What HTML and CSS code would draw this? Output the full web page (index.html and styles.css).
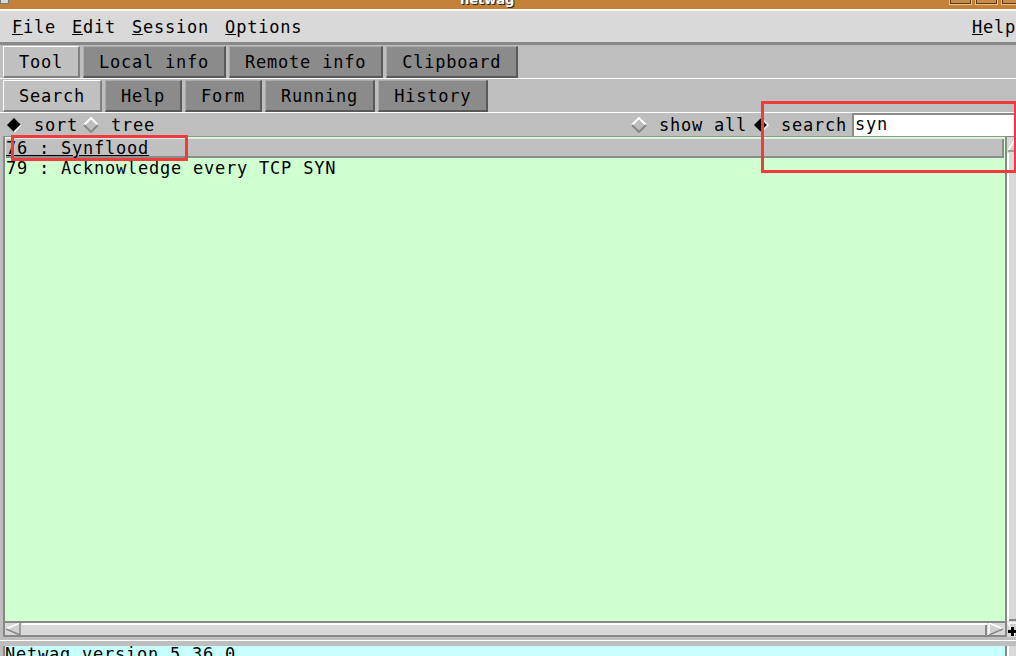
FILE: index.html
```html
<!DOCTYPE html>
<html lang="en">
<head>
    <meta charset="UTF-8">
    <title>netwag</title>
    <link rel="stylesheet" href="styles.css">
</head>
<body>
    <div class="window">
        <div class="titlebar">
            <span class="wm-icon"></span>
            <span class="title">netwag</span>
            <span class="wm-buttons"><i></i><i></i><i></i></span>
        </div>

        <div class="menubar">
            <span class="menu"><u>F</u>ile</span>
            <span class="menu"><u>E</u>dit</span>
            <span class="menu"><u>S</u>ession</span>
            <span class="menu"><u>O</u>ptions</span>
            <span class="menu menu-help"><u>H</u>elp</span>
        </div>

        <div class="tabrow">
            <span class="tab tab-on">Tool</span>
            <span class="tab">Local info</span>
            <span class="tab">Remote info</span>
            <span class="tab">Clipboard</span>
        </div>
        <div class="tabrow">
            <span class="tab tab-on">Search</span>
            <span class="tab">Help</span>
            <span class="tab">Form</span>
            <span class="tab">Running</span>
            <span class="tab">History</span>
        </div>

        <div class="optrow">
            <svg class="radio" width="16" height="16" viewBox="0 0 16 16">
                <polygon points="8,1 15,8 8,15 1,8" fill="#000"/>
                <polyline points="8,15 15,8" stroke="#fff" stroke-width="1.5" fill="none"/>
            </svg>
            <span class="lbl">sort</span>
            <svg class="radio radio-next" width="16" height="16" viewBox="0 0 16 16">
                <polygon points="8,1 15,8 8,15 1,8" fill="#bebebe"/>
                <polyline points="1,8 8,1 15,8" stroke="#fff" stroke-width="2" fill="none"/>
                <polyline points="1,8 8,15 15,8" stroke="#888" stroke-width="2" fill="none"/>
            </svg>
            <span class="lbl">tree</span>

            <svg class="radio radio-right" width="16" height="16" viewBox="0 0 16 16">
                <polygon points="8,1 15,8 8,15 1,8" fill="#bebebe"/>
                <polyline points="1,8 8,1 15,8" stroke="#fff" stroke-width="2" fill="none"/>
                <polyline points="1,8 8,15 15,8" stroke="#888" stroke-width="2" fill="none"/>
            </svg>
            <span class="lbl lbl-gap">show all</span>
            <svg class="radio" width="16" height="16" viewBox="0 0 16 16">
                <polygon points="8,1 15,8 8,15 1,8" fill="#000"/>
                <polyline points="8,15 15,8 8,1" stroke="#fff" stroke-width="1.5" fill="none"/>
            </svg>
            <span class="lbl lbl-field">search</span>
            <span class="field">syn</span>
        </div>

        <div class="main">
            <div class="listcol">
                <div class="list">
                    <div class="row row-sel"><span class="u">76 : Synflood</span></div>
                    <div class="row">79 : Acknowledge every TCP SYN</div>
                </div>
                <div class="hscroll">
                    <svg class="arrow" width="16" height="12" viewBox="0 0 16 12">
                        <polygon points="1,6 15,0 15,12" fill="#d0d0d0"/>
                        <polyline points="1,6 15,0" stroke="#fff" stroke-width="1.5" fill="none"/>
                        <polyline points="1,6 15,12 15,0" stroke="#888" stroke-width="1.5" fill="none"/>
                    </svg>
                    <span class="hthumb"></span>
                    <svg class="arrow" width="16" height="12" viewBox="0 0 16 12">
                        <polygon points="15,6 1,0 1,12" fill="#d0d0d0"/>
                        <polyline points="1,12 1,0 15,6" stroke="#fff" stroke-width="1.5" fill="none"/>
                        <polyline points="15,6 1,12" stroke="#888" stroke-width="1.5" fill="none"/>
                    </svg>
                </div>
            </div>
            <div class="vscroll">
                <svg class="varrow" width="17" height="15" viewBox="0 0 17 15">
                    <polygon points="8.5,1 16,14 1,14" fill="#d0d0d0"/>
                    <polyline points="1,14 8.5,1" stroke="#fff" stroke-width="1.5" fill="none"/>
                    <polyline points="8.5,1 16,14 1,14" stroke="#888" stroke-width="1.5" fill="none"/>
                </svg>
                <span class="vthumb"></span>
                <svg class="varrow" width="17" height="15" viewBox="0 0 17 15">
                    <polygon points="8.5,14 1,1 16,1" fill="#d0d0d0"/>
                    <polyline points="8.5,14 1,1 16,1" stroke="#fff" stroke-width="1.5" fill="none"/>
                    <polyline points="16,1 8.5,14" stroke="#888" stroke-width="1.5" fill="none"/>
                </svg>
            </div>
        </div>

        <div class="sep"></div>

        <div class="statusrow">
            <div class="status">Netwag version 5.36.0</div>
            <div class="status-sb"></div>
        </div>
    </div>

    <div class="mark mark-row"></div>
    <div class="mark mark-search"></div>
    <svg class="cursor" width="9" height="9" viewBox="0 0 9 9">
        <rect x="3" y="0" width="3" height="9" fill="#000"/>
        <rect x="0" y="3" width="9" height="3" fill="#000"/>
    </svg>
</body>
</html>
```

FILE: styles.css
```css
* {
    margin: 0;
    padding: 0;
    box-sizing: border-box;
}
html, body {
    width: 1016px;
    height: 656px;
    overflow: hidden;
}
body {
    position: relative;
    background-color: #bebebe;
    font-family: "DejaVu Sans Mono", monospace;
    font-size: 17px;
    letter-spacing: 0.77px;
    color: #000;
}
.window {
    width: 1024px;
    height: 680px;
    display: flex;
    flex-direction: column;
    background-color: #bebebe;
}

/* window manager title */
.titlebar {
    flex: none;
    height: 11px;
    display: flex;
    align-items: flex-end;
    background-color: #c38137;
    border-bottom: 2px solid #fff;
    overflow: hidden;
}
.wm-icon {
    width: 9px;
    height: 12px;
    margin-bottom: 5px;
    background-color: #d8d8d8;
    border: 1px solid #777;
}
.title {
    margin-left: 451px;
    margin-bottom: 3px;
    font-family: "DejaVu Sans", sans-serif;
    font-weight: bold;
    font-size: 13px;
    line-height: 13px;
    letter-spacing: 0;
    color: #fff;
    text-shadow: 1px 1px 0 #222;
}
.wm-buttons {
    margin-left: auto;
    margin-bottom: 4px;
    display: flex;
    gap: 3px;
}
.wm-buttons i {
    width: 23px;
    height: 22px;
    background-color: #b87a36;
    border: 1px solid #e9c48f;
    box-shadow: inset 0 0 0 1px #5a3a16, inset 0 -4px 0 1px #c98c48;
}

/* menu */
.menubar {
    flex: none;
    height: 34px;
    display: flex;
    padding: 1px 0 0 4px;
    background-color: #d9d9d9;
    border-bottom: 3px solid #888;
    line-height: 30px;
}
.menu {
    padding: 0 8px;
}
.menu-help {
    margin-left: auto;
}

/* notebook tabs */
.tabrow {
    flex: none;
    height: 34px;
    display: flex;
    gap: 3px;
    padding: 1px 0 0 3px;
    border-bottom: 1px solid #fff;
}
.tab {
    height: 32px;
    padding: 1px 15px 0;
    line-height: 28px;
    white-space: pre;
    background-color: #8b8b8b;
    border-style: solid;
    border-width: 1px 2px 2px 1px;
    border-color: #ababab #595959 #595959 #ababab;
}
.tab-on {
    background-color: #c0c0c0;
    border-color: #fff #808080 #808080 #fff;
}

/* options line */
.optrow {
    flex: none;
    height: 23px;
    display: flex;
    padding: 2px 0 0 6px;
    line-height: 21px;
}
.radio {
    display: block;
    margin-top: 2px;
    margin-right: 12px;
}
.radio-next {
    margin-left: 5px;
}
.radio-right {
    margin-left: auto;
}
.lbl {
    white-space: pre;
}
.lbl-gap {
    margin-right: 6px;
}
.lbl-field {
    margin-right: 5px;
}
.field {
    width: 172px;
    height: 23px;
    margin-top: -2px;
    padding-left: 1px;
    line-height: 19px;
    background-color: #fff;
    border-top: 2px solid #8a8a8a;
    border-left: 2px solid #8a8a8a;
}

/* list + scrollbars */
.main {
    flex: none;
    height: 501px;
    display: flex;
    padding-left: 3px;
}
.listcol {
    flex: 1;
    display: flex;
    flex-direction: column;
}
.list {
    flex: 1;
    padding-top: 1px;
    background-color: #d0ffd0;
    border-left: 2px solid #888;
    border-top: 1px solid #8a9a8a;
}
.row {
    height: 20px;
    line-height: 20px;
    padding-left: 1px;
    white-space: pre;
}
.row-sel {
    margin-right: 1px;
    background-color: #c0c0c0;
    box-shadow: inset 1px 1px 0 #e6e6e6, inset -2px -2px 0 #8c8c8c;
}
.u {
    text-decoration: underline;
}
.hscroll {
    flex: none;
    height: 16px;
    display: flex;
    padding-right: 1px;
    background-color: #d9d9d9;
    border-left: 2px solid #888;
    border-top: 2px solid #888;
    border-bottom: 2px solid #888;
}
.arrow {
    display: block;
    flex: none;
}
.hthumb {
    flex: 1;
    margin: 0 1px;
    box-shadow: inset 0 2px 0 #fff, inset -2px 0 0 #888;
}
.vscroll {
    flex: none;
    width: 19px;
    display: flex;
    flex-direction: column;
    background-color: #d9d9d9;
    border-left: 2px solid #888;
    border-top: 1px solid #888;
}
.varrow {
    display: block;
    flex: none;
}
.vthumb {
    flex: 1;
    margin: 1px 0;
    box-shadow: inset 2px 0 0 #fff, inset 0 -2px 0 #888;
}
.sep {
    flex: none;
    height: 9px;
    background: linear-gradient(#bebebe 3px, #fff 3px, #fff 4px, #bebebe 4px);
}

/* status line */
.statusrow {
    flex: 1;
    display: flex;
    padding-left: 3px;
}
.status {
    flex: 1;
    line-height: 16px;
    white-space: pre;
    background-color: #c8ffff;
    border-left: 2px solid #888;
}
.status-sb {
    width: 19px;
    background-color: #d9d9d9;
    border-left: 2px solid #888;
    box-shadow: inset 2px 0 0 #fff;
}

/* red annotation boxes drawn over the screenshot */
.mark {
    position: absolute;
    border: 3px solid #ee3b3b;
}
.mark-row {
    left: 11px;
    top: 135px;
    width: 177px;
    height: 26px;
}
.mark-search {
    left: 761px;
    top: 101px;
    width: 256px;
    height: 72px;
}
.cursor {
    position: absolute;
    left: 1008px;
    top: 627px;
}
```
